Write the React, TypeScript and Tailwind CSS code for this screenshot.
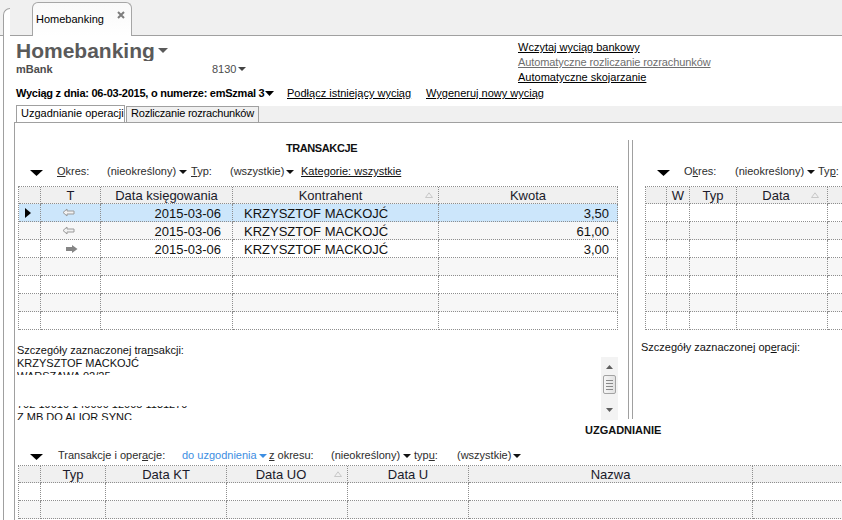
import React from "react";

type Col = { w: string; label?: string; sort?: string; labelCls?: string };

function BigTri({ className = "" }: { className?: string }) {
  return (
    <svg className={className} width="13" height="6" viewBox="0 0 13 6">
      <path d="M0 0H13L6.5 6Z" fill="#000" />
    </svg>
  );
}

function SmallTri({ color = "#111", className = "", w = 8, h = 4 }: { color?: string; className?: string; w?: number; h?: number }) {
  return (
    <svg className={className} width={w} height={h} viewBox={`0 0 ${w} ${h}`}>
      <path d={`M0 0H${w}L${w / 2} ${h}Z`} fill={color} />
    </svg>
  );
}

function SortUp({ className = "" }: { className?: string }) {
  return (
    <svg className={className} width="8" height="6" viewBox="0 0 8 6">
      <path d="M0.5 5.5L4 0.8L7.5 5.5Z" fill="none" stroke="#c8c8c8" strokeWidth="1" />
    </svg>
  );
}

function ArrowLeftHollow() {
  return (
    <svg width="13" height="9" viewBox="0 0 13 9">
      <path d="M1 4.5L5 1V3H12V6H5V8Z" fill="#f2f2f2" stroke="#9a9a9a" strokeWidth="1" />
    </svg>
  );
}

function ArrowRightSolid() {
  return (
    <svg width="12" height="8" viewBox="0 0 12 8">
      <path d="M0 2H6V0L11.5 4L6 8V6H0Z" fill="#858585" />
    </svg>
  );
}

function RowPointer() {
  return (
    <svg width="6" height="10" viewBox="0 0 6 10">
      <path d="M0 0L6 5L0 10Z" fill="#000" />
    </svg>
  );
}

function DataGrid({
  cols,
  rowCount,
  selected = -1,
  renderCell,
}: {
  cols: Col[];
  rowCount: number;
  selected?: number;
  renderCell?: (r: number, c: number) => React.ReactNode;
}) {
  return (
    <div className="border-l border-t border-dotted border-[#8e8e8e] w-max">
      <div className="flex bg-[#f0f0f0]">
        {cols.map((c, i) => (
          <div
            key={i}
            className={`${c.w} h-[17px] shrink-0 border-r border-b border-dotted border-[#8e8e8e] relative flex items-center justify-center text-[13px] leading-none text-[#1a1a2a] whitespace-nowrap`}
          >
            <span className={c.labelCls}>{c.label}</span>
            {c.sort && <SortUp className={`absolute top-[5px] ${c.sort}`} />}
          </div>
        ))}
      </div>
      {Array.from({ length: rowCount }).map((_, r) => (
        <div
          key={r}
          className={`flex ${r === selected ? "bg-[#cce6fb]" : r % 2 === 1 ? "bg-[#f7f7f7]" : "bg-white"}`}
        >
          {cols.map((c, i) => (
            <div
              key={i}
              className={`${c.w} h-[18px] shrink-0 border-r border-b border-dotted border-[#8e8e8e] text-[13px] leading-none text-[#111] whitespace-nowrap`}
            >
              {renderCell ? renderCell(r, i) : null}
            </div>
          ))}
        </div>
      ))}
    </div>
  );
}

const leftCols: Col[] = [
  { w: "w-[22px]" },
  { w: "w-[60px]", label: "T" },
  { w: "w-[132px]", label: "Data księgowania" },
  { w: "w-[206px]", label: "Kontrahent", sort: "right-[5px]", labelCls: "pr-[10px]" },
  { w: "w-[179px]", label: "Kwota" },
];

const rightCols: Col[] = [
  { w: "w-[21px]" },
  { w: "w-[23px]", label: "W" },
  { w: "w-[47px]", label: "Typ" },
  { w: "w-[91px]", label: "Data", sort: "right-[8px]", labelCls: "pr-[12px]" },
  { w: "w-[60px]" },
];

const bottomCols: Col[] = [
  { w: "w-[22px]" },
  { w: "w-[65px]", label: "Typ" },
  { w: "w-[121px]", label: "Data KT" },
  { w: "w-[121px]", label: "Data UO", sort: "right-[5px]", labelCls: "pr-[12px]" },
  { w: "w-[121px]", label: "Data U" },
  { w: "w-[284px]", label: "Nazwa" },
  { w: "w-[100px]" },
];

const txRows = [
  { dir: "l", date: "2015-03-06", name: "KRZYSZTOF MACKOJĆ", amt: "3,50" },
  { dir: "l", date: "2015-03-06", name: "KRZYSZTOF MACKOJĆ", amt: "61,00" },
  { dir: "r", date: "2015-03-06", name: "KRZYSZTOF MACKOJĆ", amt: "3,00" },
];

function renderTx(r: number, c: number) {
  const d = txRows[r];
  if (!d) return null;
  if (c === 0)
    return r === 0 ? (
      <div className="h-full flex items-center pl-[6px]">
        <RowPointer />
      </div>
    ) : null;
  if (c === 1)
    return d.dir === "l" ? (
      <div className="h-full flex items-center pl-[21px]">
        <ArrowLeftHollow />
      </div>
    ) : (
      <div className="h-full flex items-center pl-[25px]">
        <ArrowRightSolid />
      </div>
    );
  if (c === 2) return <div className="h-full flex items-center justify-end pr-[11px] pt-[1px]">{d.date}</div>;
  if (c === 3) return <div className="h-full flex items-center pl-[11px] pt-[1px]">{d.name}</div>;
  return <div className="h-full flex items-center justify-end pr-[8px] pt-[1px]">{d.amt}</div>;
}

function VScroll() {
  return (
    <div className="w-[17px] h-[63px] shrink-0 bg-[#f3f3f3] flex flex-col items-center">
      <svg className="mt-[8px]" width="7" height="4" viewBox="0 0 7 4">
        <path d="M0 4L3.5 0L7 4Z" fill="#5f5f5f" />
      </svg>
      <div className="mt-[6px] w-[13px] h-[19px] rounded-[2px] border border-[#a3a3a3] bg-linear-to-r from-[#f6f6f6] to-[#e2e2e2] flex flex-col items-center justify-center gap-[2px]">
        <div className="w-[7px] h-px bg-[#8a8a8a]" />
        <div className="w-[7px] h-px bg-[#8a8a8a]" />
        <div className="w-[7px] h-px bg-[#8a8a8a]" />
        <div className="w-[7px] h-px bg-[#8a8a8a]" />
      </div>
      <svg className="mt-auto mb-[8px]" width="7" height="4" viewBox="0 0 7 4">
        <path d="M0 0L3.5 4L7 0Z" fill="#5f5f5f" />
      </svg>
    </div>
  );
}

export default function App() {
  return (
    <div className="w-[842px] h-[520px] overflow-hidden bg-white font-['Liberation_Sans',Arial,sans-serif] text-[#111] flex flex-col">
      {/* top document tab bar */}
      <div className="h-[36px] shrink-0 flex items-start bg-[#f0f0f0] border-b border-[#a0a0a0]">
        <div className="ml-[3px] mt-[8px] w-[7px] h-[28px] shrink-0 border-l border-t border-[#a0a0a0] rounded-tl-[7px] bg-white" />
        <div className="ml-[22px] mt-[2px] w-[100px] h-[34px] shrink-0 rounded-t-[6px] border border-b-0 border-[#a6a6a6] bg-linear-to-b from-[#f9f9f9] to-white flex items-start">
          <span className="ml-[3px] mt-[10px] text-[11px] leading-[13px] text-black">Homebanking</span>
          <svg className="ml-auto mr-[6px] mt-[8px]" width="8" height="8" viewBox="0 0 8 8">
            <path d="M1 1L7 7M7 1L1 7" stroke="#7d7d7d" strokeWidth="2" />
          </svg>
        </div>
      </div>

      <div className="flex-1 flex min-h-0">
        <div className="w-[3px] shrink-0" />
        <div className="flex-1 border-l border-[#a0a0a0] flex flex-col min-w-0">
          {/* header */}
          <div className="pl-[12px] pt-[4px] flex shrink-0">
            <div className="w-[502px] shrink-0">
              <div className="h-[21px] overflow-hidden flex items-start">
                <span className="text-[21px] leading-[21px] font-bold text-[#5a5a5a]">Homebanking</span>
                <SmallTri className="ml-[3px] mt-[8px]" color="#5a5a5a" w={10} h={5} />
              </div>
              <div className="mt-[2px] h-[13px] flex items-start text-[11px] leading-[13px] text-[#4d4d4d]">
                <span className="w-[196px] shrink-0 font-bold">mBank</span>
                <span>8130</span>
                <SmallTri className="ml-[2px] mt-[4px]" color="#444" />
              </div>
            </div>
            <div className="flex flex-col text-[11px] leading-[15px]">
              <span className="text-black underline">Wczytaj wyciąg bankowy</span>
              <span className="text-[#6e6e6e] underline tracking-[-0.1px]">Automatyczne rozliczanie rozrachunków</span>
              <span className="text-black underline">Automatyczne skojarzanie</span>
            </div>
          </div>

          <div className="mt-[2px] pl-[12px] h-[13px] flex items-start text-[11px] leading-[13px] text-black shrink-0">
            <span className="w-[249px] shrink-0 font-bold tracking-[-0.25px] whitespace-nowrap">
              Wyciąg z dnia: 06-03-2015, o numerze: emSzmal 3
            </span>
            <span className="w-[22px] shrink-0 pt-[4px]">
              <SmallTri color="#000" w={9} h={5} />
            </span>
            <span className="w-[139px] shrink-0 underline whitespace-nowrap">Podłącz istniejący wyciąg</span>
            <span className="underline whitespace-nowrap">Wygeneruj nowy wyciąg</span>
          </div>

          {/* page tabs */}
          <div className="h-[22px] shrink-0 flex items-end pl-[12px]">
            <div className="h-[17px] w-[109px] shrink-0 border border-b-0 border-[#a0a0a0] bg-white text-[11px] leading-[13px] pl-[4px] pt-[1px] whitespace-nowrap text-black">
              Uzgadnianie operacji
            </div>
            <div className="ml-[1px] h-[16px] w-[133px] shrink-0 border border-b-0 border-[#a0a0a0] bg-[#f0f0f0] text-[11px] leading-[13px] pl-[4px] tracking-[-0.2px] whitespace-nowrap overflow-hidden text-black">
              Rozliczanie rozrachunków
            </div>
            <div className="flex-1 h-[16px] bg-[#f0f0f0]" />
          </div>

          {/* panel */}
          <div className="ml-[10px] border-l border-t border-[#a0a0a0] flex-1 flex flex-col min-h-0">
            <div className="h-[299px] shrink-0 flex">
              {/* left: transactions */}
              <div className="w-[613px] shrink-0 flex flex-col">
                <div className="mt-[19px] text-center text-[11px] leading-[13px] font-bold tracking-[-0.4px] text-[#111]">
                  TRANSAKCJE
                </div>
                <div className="mt-[10px] pl-[15px] h-[13px] flex items-start text-[11px] leading-[13px] text-[#2d2d2d] whitespace-nowrap">
                  <span className="w-[27px] shrink-0 pt-[5px]">
                    <BigTri />
                  </span>
                  <span className="w-[50px] shrink-0">
                    <span className="underline">O</span>kres:
                  </span>
                  <span className="w-[84px] shrink-0 flex items-start">
                    (nieokreślony)
                    <SmallTri className="ml-[3px] mt-[5px]" color="#111" />
                  </span>
                  <span className="w-[39px] shrink-0">
                    <span className="underline">T</span>yp:
                  </span>
                  <span className="w-[71px] shrink-0 flex items-start">
                    (wszystkie)
                    <SmallTri className="ml-[2px] mt-[5px]" color="#111" />
                  </span>
                  <span className="underline text-[#111]">Kategorie: wszystkie</span>
                </div>
                <div className="mt-[8px] pl-[3px]">
                  <DataGrid cols={leftCols} rowCount={7} selected={0} renderCell={renderTx} />
                </div>
                <div className="mt-[14px] pl-[2px] text-[11px] leading-[13px] text-[#111] whitespace-nowrap">
                  Szczegóły zaznaczonej tra<span className="underline">n</span>sakcji:
                </div>
                <div className="h-[63px] flex">
                  <div className="w-[586px] shrink-0 pl-[2px] flex flex-col text-[11px] leading-[13px] text-[#111] whitespace-nowrap">
                    <div className="h-[18px] overflow-hidden">
                      <div>KRZYSZTOF MACKOJĆ</div>
                      <div>WARSZAWA 02/25</div>
                    </div>
                    <div className="flex-1" />
                    <div className="h-[14px] overflow-hidden">
                      <div className="mt-[-8px]">702 19010 140000 12005 1131270</div>
                      <div>Z MB DO ALIOR SYNC</div>
                    </div>
                  </div>
                  <VScroll />
                </div>
              </div>

              {/* splitter */}
              <div className="w-[5px] shrink-0 mt-[17px] h-[279px] border-l border-r border-[#a0a0a0]" />

              {/* right: operations */}
              <div className="flex-1 flex flex-col min-w-0">
                <div className="mt-[42px] pl-[24px] h-[13px] flex items-start text-[11px] leading-[13px] text-[#2d2d2d] whitespace-nowrap">
                  <span className="w-[27px] shrink-0 pt-[5px]">
                    <BigTri />
                  </span>
                  <span className="w-[51px] shrink-0">
                    O<span className="underline">k</span>res:
                  </span>
                  <span className="w-[83px] shrink-0 flex items-start">
                    (nieokreślony)
                    <SmallTri className="ml-[3px] mt-[5px]" color="#111" />
                  </span>
                  <span className="shrink-0">
                    Ty<span className="underline">p</span>:
                  </span>
                </div>
                <div className="mt-[8px] pl-[12px]">
                  <DataGrid cols={rightCols} rowCount={7} />
                </div>
                <div className="mt-[11px] pl-[8px] text-[11px] leading-[13px] text-[#111] whitespace-nowrap">
                  Szczegóły zaznaczonej op<span className="underline">e</span>racji:
                </div>
              </div>
            </div>

            {/* reconciliation */}
            <div className="pt-[2px] pl-[570px] text-[11px] leading-[13px] font-bold text-[#111] whitespace-nowrap">
              UZGADNIANIE
            </div>
            <div className="mt-[12px] pl-[15px] h-[13px] flex items-start text-[11px] leading-[13px] text-[#2d2d2d] whitespace-nowrap">
              <span className="w-[28px] shrink-0 pt-[5px]">
                <BigTri />
              </span>
              <span className="w-[124px] shrink-0">
                Transakcje i oper<span className="underline">a</span>cje:
              </span>
              <span className="w-[87px] shrink-0 flex items-start text-[#3d8ee2]">
                do uzgodnienia
                <SmallTri className="ml-[2px] mt-[5px]" color="#3d8ee2" />
              </span>
              <span className="w-[62px] shrink-0">
                <span className="underline">z</span> okresu:
              </span>
              <span className="w-[83px] shrink-0 flex items-start">
                (nieokreślony)
                <SmallTri className="ml-[3px] mt-[5px]" color="#111" />
              </span>
              <span className="w-[43px] shrink-0">
                typ<span className="underline">u</span>:
              </span>
              <span className="shrink-0 flex items-start">
                (wszystkie)
                <SmallTri className="ml-[2px] mt-[5px]" color="#111" />
              </span>
            </div>
            <div className="mt-[3px] pl-[3px]">
              <DataGrid cols={bottomCols} rowCount={2} />
            </div>
          </div>
        </div>
      </div>
    </div>
  );
}
